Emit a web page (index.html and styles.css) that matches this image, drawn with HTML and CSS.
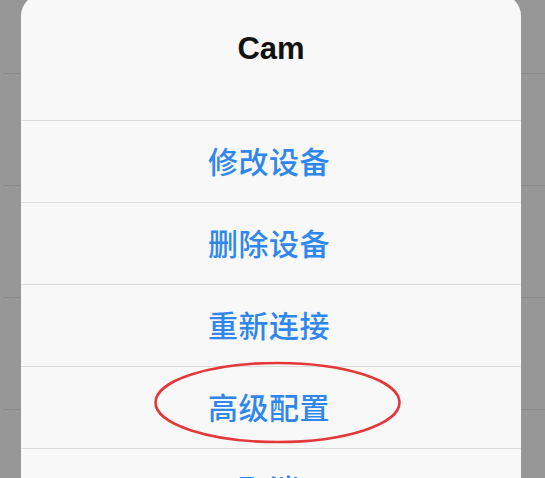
FILE: index.html
```html
<!DOCTYPE html>
<html lang="zh-CN">
<head>
<meta charset="utf-8">
<title>Cam</title>
<link rel="stylesheet" href="styles.css">
</head>
<body>
<div class="page">
  <div class="bg-row bg-first"></div>
  <div class="bg-row"></div>
  <div class="bg-row"></div>
  <div class="bg-row"></div>
  <div class="bg-row"></div>
</div>
<div class="sheet">
  <div class="sheet-title">Cam</div>
  <div class="sheet-item">修改设备</div>
  <div class="sheet-item">删除设备</div>
  <div class="sheet-item">重新连接</div>
  <div class="sheet-item">高级配置</div>
  <div class="sheet-item">取消</div>
  <svg class="mark" width="249" height="83" viewBox="0 0 249 83">
    <ellipse cx="124.5" cy="41.5" rx="122" ry="39.5" fill="none" stroke="#e3383a" stroke-width="2.6"/>
  </svg>
</div>
</body>
</html>
```
FILE: styles.css
```css
html, body {
  margin: 0;
  padding: 0;
  height: 100%;
  overflow: hidden;
}
body {
  background: #979797;
  position: relative;
  font-family: "Liberation Sans", "Noto Sans CJK SC", sans-serif;
}
.page {
  display: flex;
  flex-direction: column;
  padding-left: 3px;
}
.bg-row {
  height: 111px;
  border-bottom: 1px solid #8a8a8a;
  flex: none;
}
.bg-first {
  height: 73px;
}
.sheet {
  position: absolute;
  left: 21px;
  top: -6px;
  width: 500px;
  height: 620px;
  background: #f8f8f8;
  border-radius: 22px;
  display: flex;
  flex-direction: column;
}
.sheet-title {
  box-sizing: border-box;
  height: 126px;
  padding-top: 38px;
  text-align: center;
  font-family: "Liberation Sans", Arial, sans-serif;
  font-weight: bold;
  font-size: 31px;
  line-height: 34px;
  color: #111;
  flex: none;
}
.sheet-item {
  flex: none;
  box-sizing: border-box;
  height: 82px;
  padding-bottom: 3px;
  padding-right: 4px;
  border-top: 1px solid #dcdcdc;
  display: flex;
  align-items: center;
  justify-content: center;
  font-family: "Noto Sans CJK SC", "Noto Sans", sans-serif;
  font-weight: 500;
  font-size: 30px;
  color: #2f87ee;
  letter-spacing: 0.5px;
}
.mark {
  position: absolute;
  left: 132px;
  top: 367px;
}
```
